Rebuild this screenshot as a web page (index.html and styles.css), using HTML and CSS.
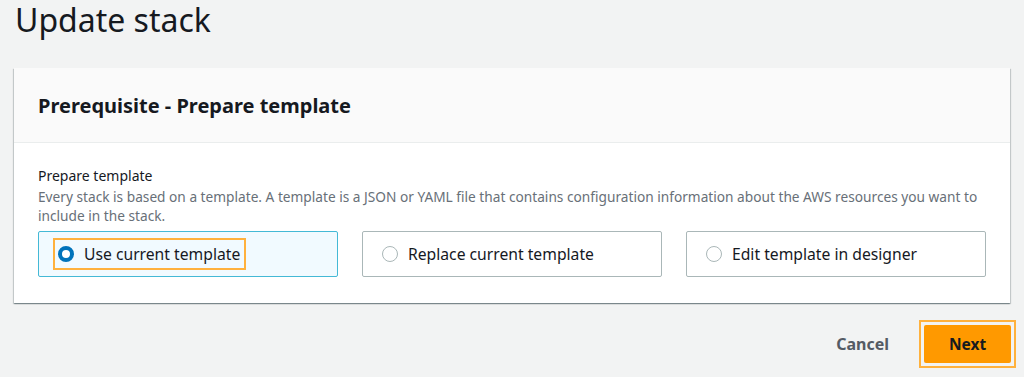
FILE: index.html
```html
<!DOCTYPE html>
<html lang="en">
<head>
  <meta charset="UTF-8" />
  <title>Update stack</title>
  <link rel="stylesheet" href="styles.css">
</head>
<body>
  <h1 class="page-title">Update stack</h1>

  <div class="card">
    <div class="card-header">
      <h2>Prerequisite - Prepare template</h2>
    </div>
    <div class="card-body">
      <div class="field-label">Prepare template</div>
      <div class="field-desc">Every stack is based on a template. A template is a JSON or YAML file that contains configuration information about the AWS resources you want to include in the stack.</div>

      <div class="tiles">
        <label class="tile selected">
          <span class="focus-ring">
            <span class="radio checked"></span>
            <span>Use current template</span>
          </span>
        </label>
        <label class="tile">
          <span class="radio"></span>
          <span>Replace current template</span>
        </label>
        <label class="tile">
          <span class="radio"></span>
          <span>Edit template in designer</span>
        </label>
      </div>
    </div>
  </div>

  <div class="actions">
    <button class="link-btn">Cancel</button>
    <span class="btn-ring"><button class="primary-btn">Next</button></span>
  </div>
</body>
</html>
```

FILE: styles.css
```css
body {
  margin: 0;
  padding: 0 14px;
  background: #f2f3f3;
  font-family: 'Noto Sans', sans-serif;
  color: #16191f;
}

.page-title {
  margin: 0;
  height: 68px;
  padding-top: 0;
  box-sizing: border-box;
  font-size: 32px;
  font-weight: 400;
  line-height: 40px;
  padding-left: 1px;
}

/* Container */
.card {
  background: #fff;
  box-shadow: 0 1px 1px 0 rgba(0, 28, 36, 0.3), 1px 1px 1px 0 rgba(0, 28, 36, 0.15), -1px 1px 1px 0 rgba(0, 28, 36, 0.15);
}

.card-header {
  background: #fafafa;
  border-bottom: 1px solid #eaeded;
  height: 75px;
  box-sizing: border-box;
  padding: 0 24px;
  display: flex;
  align-items: center;
}

.card-header h2 {
  margin: 0;
  font-size: 20px;
  font-weight: 700;
}

.card-body {
  padding: 23px 24px 26px;
}

.field-label {
  font-size: 14px;
  line-height: 20px;
}

.field-desc {
  font-size: 13.7px;
  line-height: 19px;
  margin-top: 1px;
  color: #687078;
}

/* Tiles */
.tiles {
  display: grid;
  grid-template-columns: repeat(3, 300px);
  gap: 24px;
  margin-top: 6px;
}

.tile {
  height: 46px;
  box-sizing: border-box;
  border: 1px solid #aab7b8;
  border-radius: 2px;
  display: flex;
  align-items: center;
  gap: 10px;
  padding: 0 19px;
  font-size: 15.7px;
}

.tile.selected {
  background: #f1faff;
  border-color: #44b9d6;
  padding: 0 14px;
}

.focus-ring {
  display: flex;
  align-items: center;
  gap: 10px;
  height: 32px;
  box-sizing: border-box;
  border: 2px solid #ffb13d;
  padding: 0 4px 0 3px;
}

.radio {
  width: 16px;
  height: 16px;
  box-sizing: border-box;
  border: 1.5px solid #aab7b8;
  border-radius: 50%;
  background: #fff;
}

.radio.checked {
  border: 4px solid #0073bb;
}

/* Footer buttons */
.actions {
  display: flex;
  justify-content: flex-end;
  align-items: center;
  gap: 30px;
  margin-top: 17px;
  margin-right: -6px;
}

.link-btn {
  background: none;
  border: none;
  font-family: inherit;
  font-size: 16px;
  font-weight: 700;
  color: #545b64;
  padding: 0;
}

.btn-ring {
  display: inline-block;
  padding: 3px;
  border: 2px solid #ffb13d;
}

.primary-btn {
  display: block;
  width: 87px;
  height: 38px;
  background: #ff9900;
  border: none;
  border-radius: 2px;
  font-family: inherit;
  font-size: 15.5px;
  font-weight: 700;
  color: #16191f;
}
```
